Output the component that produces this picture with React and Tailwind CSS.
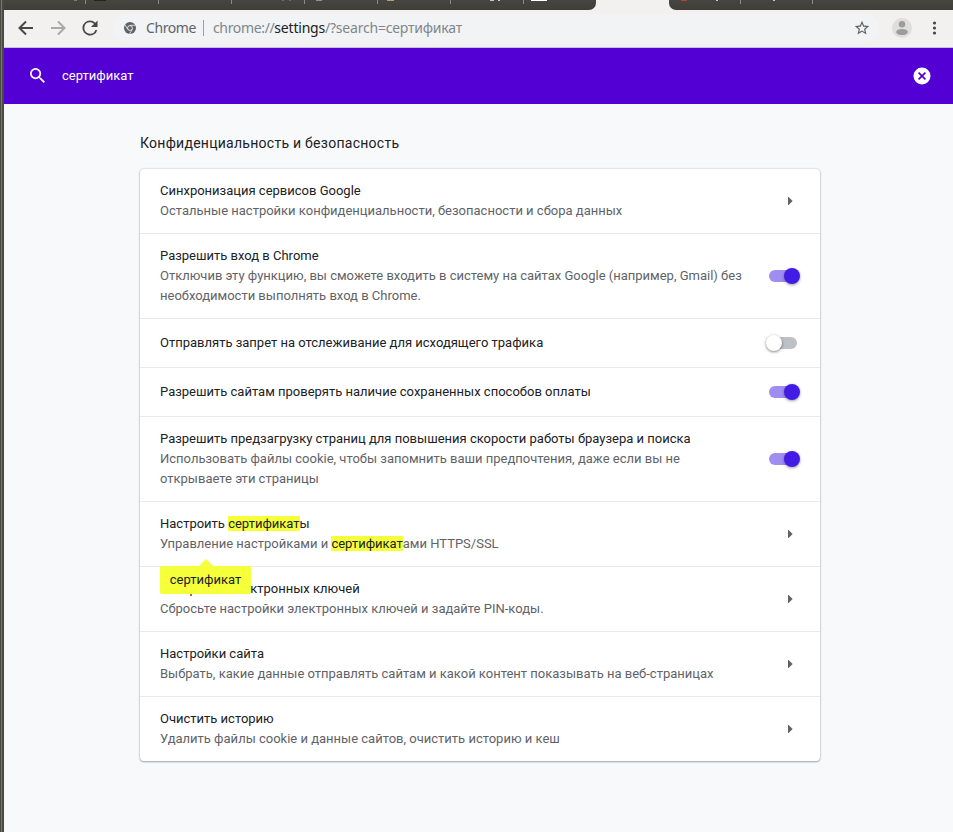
import React from "react";

function Toggle({ on }) {
  return on ? (
    <span className="relative mr-2 block h-3 w-[27px] rounded-full bg-[#a08df2]">
      <span className="absolute -top-0.5 left-[15px] size-4 rounded-full bg-[#431be6] shadow-[0_1px_3px_rgba(0,0,0,0.4)]" />
    </span>
  ) : (
    <span className="relative mr-[7px] block h-3 w-[28px] rounded-full bg-[#bdc1c6]">
      <span className="absolute -top-0.5 -left-[3px] size-4 rounded-full bg-white shadow-[0_1px_3px_rgba(0,0,0,0.5)]" />
    </span>
  );
}

function Arrow() {
  return (
    <svg className="mr-[11px] block" width="5" height="8" viewBox="0 0 5 8">
      <path d="M0 0H0.6L4.6 4L0.6 8H0Z" fill="#5f6368" />
    </svg>
  );
}

function Mark({ children }) {
  return <mark className="bg-[#f5ff3a] text-[#202124]">{children}</mark>;
}

function Row({ title, lines = [], control, height, children }) {
  return (
    <div className={`relative flex items-center border-b border-[#e9eaec] pl-5 pr-4 last:border-b-0 ${height}`}>
      <div className="flex-1 whitespace-nowrap">
        <div className="text-[#202124]">{title}</div>
        {lines.map((line, i) => (
          <div key={i} className="text-[#5f6368]">{line}</div>
        ))}
      </div>
      {control}
      {children}
    </div>
  );
}

const tabSeparators = ["ml-[81px]", "ml-[72px]", "ml-[72px]", "ml-[72px]", "ml-[72px]", "ml-[72px]", "ml-[72px]"];

function TabStrip() {
  return (
    <div className="relative flex h-[10px] bg-[#f2f1ef]">
      <div className="flex w-[592px] rounded-br-[7px] bg-gradient-to-b from-[#46453f] to-[#3f3e38]">
        {tabSeparators.map((m, i) => (
          <span key={i} className={`h-1 w-px shrink-0 bg-[#8b8a84] ${m}`} />
        ))}
      </div>
      <div className="w-[73px]" />
      <div className="flex flex-1 rounded-bl-[7px] bg-gradient-to-b from-[#46453f] to-[#3f3e38]">
        <span className="ml-[71px] h-1 w-px bg-[#8b8a84]" />
        <span className="ml-[71px] h-1 w-px bg-[#8b8a84]" />
      </div>
      <span className="absolute left-[70px] top-0 h-px w-[3px] bg-[#7d7c76]" />
      <span className="absolute left-[90px] top-0 h-px w-3 bg-[#252522]" />
      <span className="absolute left-[278px] top-0 h-px w-[2px] bg-[#6d6c66]" />
      <span className="absolute left-[285px] top-0 h-px w-[2px] bg-[#6d6c66]" />
      <span className="absolute left-[312px] top-0 h-px w-[6px] bg-[#8f9290]" />
      <span className="absolute left-[383px] top-0 h-px w-[7px] bg-[#aaa084]" />
      <span className="absolute left-[486px] top-0 h-px w-[4px] bg-[#c8c7c0]" />
      <span className="absolute left-[494px] top-0 h-px w-[2px] bg-[#c8c7c0]" />
      <span className="absolute left-[527px] top-0 h-px w-4 bg-white" />
      <span className="absolute left-[677px] top-0 h-px w-1.5 rounded-b bg-[#c0402f]" />
      <span className="absolute left-[712px] top-0 h-px w-[2px] bg-[#c8c7c0]" />
      <span className="absolute left-[769px] top-0 h-px w-[2px] bg-[#c8c7c0]" />
    </div>
  );
}

function Toolbar() {
  return (
    <div className="flex h-[38px] items-center border-b border-[#c9c2dc] bg-[#f2f1ef] pb-px">
      <svg className="ml-[14px] block shrink-0" width="16" height="16" viewBox="0 0 16 16" fill="none" stroke="#474747" strokeWidth="2">
        <path d="M15 8H2M8 1.5L1.5 8L8 14.5" />
      </svg>
      <svg className="ml-4 block shrink-0" width="16" height="16" viewBox="0 0 16 16" fill="none" stroke="#a9a9a8" strokeWidth="2">
        <path d="M1 8H14M8 1.5L14.5 8L8 14.5" />
      </svg>
      <svg className="ml-4 block shrink-0" width="16" height="16" viewBox="3.5 3.5 17 17" fill="#474747">
        <path d="M17.65 6.35A7.96 7.96 0 0 0 12 4a8 8 0 1 0 7.73 10h-2.08A6 6 0 1 1 12 6c1.66 0 3.14.69 4.22 1.78L13 11h7V4z" />
      </svg>
      <div className="ml-[15px] flex h-7 w-[766px] shrink-0 items-center rounded-full bg-[#f1f3f4] font-['Noto_Sans','Open_Sans',sans-serif] text-[14px] text-[#5f6368]">
        <svg className="ml-[11px] block shrink-0" width="12" height="12" viewBox="0 0 12 12">
          <circle cx="6" cy="6" r="6" fill="#5f6368" />
          <circle cx="6" cy="6" r="2.4" fill="#5f6368" stroke="#f1f3f4" strokeWidth="0.9" />
          <path d="M6 3.3H11.4M3.7 7.3L1 2.6M8.3 7.3L5.6 12" stroke="#f1f3f4" strokeWidth="0.8" />
        </svg>
        <span className="ml-[10px] w-[50px] whitespace-nowrap tracking-[-0.4px]">Chrome</span>
        <span className="ml-[7px] h-4 w-px bg-[#9aa0a6]" />
        <span className="ml-[9px] whitespace-nowrap tracking-[-0.21px] text-[#80868b]">
          <span className="tracking-[-0.35px]">chrome://</span>
          <span className="text-[#202124]">settings</span>/?search=сертификат
        </span>
        <svg className="ml-auto mr-[9px] block" width="16" height="16" viewBox="1 1 22 22" fill="#5f6368">
          <path d="M22 9.24l-7.19-.62L12 2 9.19 8.63 2 9.24l5.46 4.73L5.82 21 12 17.27 18.18 21l-1.63-7.03L22 9.24zM12 15.4l-3.76 2.27 1-4.28-3.32-2.88 4.38-.38L12 6.1l1.71 4.04 4.38.38-3.32 2.88 1 4.28L12 15.4z" />
        </svg>
      </div>
      <svg className="ml-[13px] block shrink-0" width="20" height="20" viewBox="0 0 20 20">
        <circle cx="10" cy="10" r="10" fill="#dededd" />
        <circle cx="10" cy="6.2" r="3.2" fill="#9c9c9b" />
        <ellipse cx="10" cy="14" rx="5.8" ry="3.1" fill="#9c9c9b" />
      </svg>
      <svg className="ml-[20px] block shrink-0" width="5" height="14" viewBox="0 0 5 14" fill="#474747">
        <circle cx="2.5" cy="2" r="1.6" />
        <circle cx="2.5" cy="7" r="1.6" />
        <circle cx="2.5" cy="12" r="1.6" />
      </svg>
    </div>
  );
}

function SearchBar() {
  return (
    <div className="flex h-14 items-center bg-[#5200d4] text-white">
      <svg className="mb-px ml-[26px] block" width="15" height="15" viewBox="3 3 17.5 17.5" fill="#fff">
        <path d="M15.5 14h-.79l-.28-.27A6.47 6.47 0 0 0 16 9.5 6.5 6.5 0 1 0 9.5 16c1.61 0 3.09-.59 4.23-1.57l.27.28v.79l5 4.99L20.49 19l-4.99-5zm-6 0C7.01 14 5 11.99 5 9.5S7.01 5 9.5 5 14 7.01 14 9.5 11.99 14 9.5 14z" />
      </svg>
      <span className="ml-[17px] text-[13px] leading-5">сертификат</span>
      <svg className="ml-auto mr-[22px] block" width="18" height="18" viewBox="0 0 18 18">
        <circle cx="9" cy="9" r="8.5" fill="#fff" />
        <path d="M5.6 5.6L12.4 12.4M12.4 5.6L5.6 12.4" stroke="#5200d4" strokeWidth="1.7" />
      </svg>
    </div>
  );
}

export default function App() {
  return (
    <div className="flex h-[832px] w-[953px] overflow-hidden bg-[#f8f9fb] font-[Roboto,sans-serif] text-[13px] leading-5">
      <div className="flex w-1 shrink-0 bg-[#4b4a42]">
        <span className="ml-px w-px bg-[#77756b]" />
      </div>
      <div className="flex min-w-0 flex-1 flex-col">
        <TabStrip />
        <Toolbar />
        <SearchBar />
        <main className="ml-[136px] w-[680px]">
          <h1 className="mt-[29px] text-[14.04px] leading-5 tracking-[0.25px] text-[#202124]">Конфиденциальность и безопасность</h1>
          <section className="mt-4 rounded bg-white shadow-[0_1px_2px_rgba(60,64,67,0.4),0_0_2px_rgba(60,64,67,0.3)]">
            <Row height="h-[65px]" title="Синхронизация сервисов Google" lines={["Остальные настройки конфиденциальности, безопасности и сбора данных"]} control={<Arrow />} />
            <Row height="h-[85px]" title="Разрешить вход в Chrome" lines={["Отключив эту функцию, вы сможете входить в систему на сайтах Google (например, Gmail) без", "необходимости выполнять вход в Chrome."]} control={<Toggle on />} />
            <Row height="h-[49px]" title="Отправлять запрет на отслеживание для исходящего трафика" control={<Toggle />} />
            <Row height="h-[49px]" title="Разрешить сайтам проверять наличие сохраненных способов оплаты" control={<Toggle on />} />
            <Row height="h-[85px]" title="Разрешить предзагрузку страниц для повышения скорости работы браузера и поиска" lines={["Использовать файлы cookie, чтобы запомнить ваши предпочтения, даже если вы не", "открываете эти страницы"]} control={<Toggle on />} />
            <Row height="h-[65px]" title={<>Настроить <Mark>сертификат</Mark>ы</>} lines={[<>Управление настройками и <Mark>сертификат</Mark>ами HTTPS/SSL</>]} control={<Arrow />}>
              <div className="absolute left-5 top-[64px] z-10 h-7 w-[91px] rounded-[2px] bg-[#f5ff3a] text-center leading-7 text-[#202124]">
                сертификат
                <span className="absolute -top-[5px] left-[41px] size-[10px] rotate-45 bg-[#f5ff3a]" />
              </div>
            </Row>
            <Row height="h-[65px]" title="Настройка электронных ключей" lines={["Сбросьте настройки электронных ключей и задайте PIN-коды."]} control={<Arrow />} />
            <Row height="h-[65px]" title="Настройки сайта" lines={["Выбрать, какие данные отправлять сайтам и какой контент показывать на веб-страницах"]} control={<Arrow />} />
            <Row height="h-[64px]" title="Очистить историю" lines={["Удалить файлы cookie и данные сайтов, очистить историю и кеш"]} control={<Arrow />} />
          </section>
        </main>
      </div>
    </div>
  );
}
